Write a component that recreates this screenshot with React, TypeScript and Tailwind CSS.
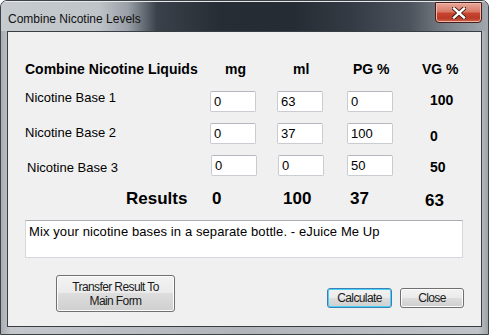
import React from 'react'

const font = { fontFamily: '"Liberation Sans", Arial, sans-serif' }

function NumBox({ value, className = '' }: { value: string; className?: string }) {
    return (
        <div
            className={`w-[46px] h-[21px] bg-white border border-[#c9ccd1] border-t-[#b5b9bf] rounded-[2px] pl-[3px] text-[13px] leading-[19px] text-black ${className}`}
        >
            {value}
        </div>
    )
}

function WinButton({ label, focused = false, className = '' }: { label: React.ReactNode; focused?: boolean; className?: string }) {
    return (
        <div
            className={`relative flex items-center justify-center text-center rounded-[3px] border text-[12px] leading-[14px] tracking-[-0.6px] text-[#1a1a1a] bg-[linear-gradient(180deg,#f2f2f2_0%,#ebebeb_48%,#dddddd_50%,#cfcfcf_100%)] ${focused
                    ? 'border-[#3c7fb1] shadow-[inset_0_0_0_1px_#48d2fb]'
                    : 'border-[#707070] shadow-[inset_0_0_0_1px_#fcfcfc]'
                } ${className}`}
        >
            {label}
        </div>
    )
}

export default function App() {
    const rows = [
        { name: 'Nicotine Base 1', mg: '0', ml: '63', pg: '0', vg: '100', labelTop: '-mt-[1px]', vgTop: 'mt-[1px]', shift: '', pgGap: 'ml-[24px]' },
        { name: 'Nicotine Base 2', mg: '0', ml: '37', pg: '100', vg: '0', labelTop: 'mt-[2px]', vgTop: 'mt-[5px]', shift: '', pgGap: 'ml-[24px]' },
        { name: 'Nicotine Base 3', mg: '0', ml: '0', pg: '50', vg: '50', labelTop: 'mt-[5px]', vgTop: 'mt-[4px]', shift: 'pl-[19px]', pgGap: 'ml-[23px]' },
    ]

    return (
        <div className="w-[489px] h-[335px] bg-white" style={font}>
            <div className="w-[489px] h-[335px] flex flex-col rounded-t-[7px] border border-[#3d4247] bg-[linear-gradient(90deg,#a9aeb3_0%,#c4c8cc_2%,#b1b5b9_50%,#c0c4c8_98%,#9ea3a8_100%)] overflow-hidden">
                {/* Title bar */}
                <div className="h-[30px] flex items-start justify-between pl-[7px] pr-[6px] bg-[linear-gradient(90deg,#c6cbd0_0%,#bfc4c9_20%,#9aa0a7_26%,#3a414a_32%,#272d35_45%,#262c34_60%,#343b44_72%,#4c535c_84%,#7d848b_92%,#a2a8ae_100%)] shadow-[inset_0_1px_0_#e6e9ec]">
                    <span className="mt-[10px] text-[12px] leading-[16px] text-[#111]">Combine Nicotine Levels</span>
                    <div className="mt-[1px] w-[47px] h-[21px] rounded-b-[4px] rounded-t-[1px] border border-[#4a1d18] bg-[linear-gradient(180deg,#e9a99b_0%,#d87a67_45%,#c7432e_55%,#b93a26_80%,#d0644d_100%)] shadow-[inset_0_0_0_1px_#efb7aa] flex items-center justify-center">
                        <svg width="14" height="12" viewBox="0 0 14 12">
                            <path d="M2 1.5 L12 10.5 M12 1.5 L2 10.5" stroke="#3b1510" strokeWidth="4.2" strokeLinecap="square" />
                            <path d="M2 1.5 L12 10.5 M12 1.5 L2 10.5" stroke="#ffffff" strokeWidth="2.4" strokeLinecap="square" />
                        </svg>
                    </div>
                </div>

                {/* Client area */}
                <div className="mx-[6px] mb-[7px] flex-1 border border-[#3a3e43] bg-[#f0f0f0] flex flex-col text-black">
                    {/* Header */}
                    <div className="mt-[29px] pl-[17px] flex h-[16px] text-[14px] leading-[16px] font-bold">
                        <span className="w-[200px]">Combine Nicotine Liquids</span>
                        <span className="w-[68px]">mg</span>
                        <span className="w-[60px]">ml</span>
                        <span className="w-[69px]">PG %</span>
                        <span>VG %</span>
                    </div>

                    {/* Bases */}
                    <div className="mt-[14px] flex flex-col gap-[11px]">
                        {rows.map((r) => (
                            <div key={r.name} className={`flex items-start h-[21px] ${r.shift || 'pl-[17px]'}`}>
                                <span className={`w-[185px] text-[13px] leading-[16px] ${r.labelTop}`}>{r.name}</span>
                                <NumBox value={r.mg} className={r.shift ? '-ml-[1px]' : ''} />
                                <NumBox value={r.ml} className="ml-[21px]" />
                                <NumBox value={r.pg} className={r.pgGap} />
                                <span className={`ml-[37px] text-[14px] leading-[16px] font-bold ${r.vgTop}`}>{r.vg}</span>
                            </div>
                        ))}
                    </div>

                    {/* Results */}
                    <div className="mt-[13px] pl-[118px] flex items-start h-[20px] text-[17px] leading-[20px] font-bold">
                        <span className="w-[86px]">Results</span>
                        <span className="w-[71px]">0</span>
                        <span className="w-[67px]">100</span>
                        <span className="w-[75px]">37</span>
                        <span className="mt-[2px]">63</span>
                    </div>

                    {/* Note box */}
                    <div className="mt-[11px] ml-[17px] w-[438px] h-[38px] bg-white border border-[#d5d8dc] border-t-[#abadb3] pl-[3px] pt-[3px] text-[13px] leading-[16px] tracking-[0.1px]">
                        Mix your nicotine bases in a separate bottle. - eJuice Me Up
                    </div>

                    {/* Buttons */}
                    <div className="mt-[17px] flex items-start">
                        <WinButton
                            className="ml-[48px] w-[119px] h-[37px]"
                            label={
                                <span>
                                    Transfer Result To
                                    <br />
                                    Main Form
                                </span>
                            }
                        />
                        <WinButton focused className="ml-[152px] mt-[13px] w-[65px] h-[20px]" label="Calculate" />
                        <WinButton className="ml-[8px] mt-[13px] w-[64px] h-[20px]" label="Close" />
                    </div>
                </div>
            </div>
        </div>
    )
}
